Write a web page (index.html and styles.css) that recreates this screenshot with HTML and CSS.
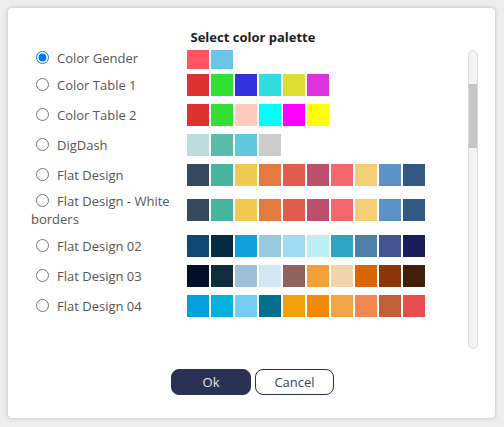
FILE: index.html
```html
<!DOCTYPE html>
<html>
<head>
<meta charset="utf-8">
<link rel="stylesheet" href="styles.css">
</head>
<body>
<div class="dialog">
  <div class="title">Select color palette</div>
  <div class="body">
    <div class="list">
      <div class="row first">
        <label class="name"><input type="radio" name="p" checked>Color Gender</label>
        <div class="swatches">
          <span class="sw" style="background:#fe5560"></span><span class="sw" style="background:#6bc5ea"></span>
        </div>
      </div>
      <div class="row">
        <label class="name"><input type="radio" name="p">Color Table 1</label>
        <div class="swatches">
          <span class="sw" style="background:#de3232"></span><span class="sw" style="background:#32e032"></span><span class="sw" style="background:#3232de"></span><span class="sw" style="background:#32dede"></span><span class="sw" style="background:#dede32"></span><span class="sw" style="background:#de32de"></span>
        </div>
      </div>
      <div class="row">
        <label class="name"><input type="radio" name="p">Color Table 2</label>
        <div class="swatches">
          <span class="sw" style="background:#de3232"></span><span class="sw" style="background:#32e032"></span><span class="sw" style="background:#ffccbf"></span><span class="sw" style="background:#00ffff"></span><span class="sw" style="background:#ff00ff"></span><span class="sw" style="background:#ffff00"></span>
        </div>
      </div>
      <div class="row">
        <label class="name"><input type="radio" name="p">DigDash</label>
        <div class="swatches">
          <span class="sw" style="background:#bddcdc"></span><span class="sw" style="background:#5abdac"></span><span class="sw" style="background:#62c8dc"></span><span class="sw" style="background:#cccccc"></span>
        </div>
      </div>
      <div class="row">
        <label class="name"><input type="radio" name="p">Flat Design</label>
        <div class="swatches">
          <span class="sw" style="background:#34495e"></span><span class="sw" style="background:#46b59c"></span><span class="sw" style="background:#f0c94f"></span><span class="sw" style="background:#e37b41"></span><span class="sw" style="background:#e05c4c"></span><span class="sw" style="background:#be4f6c"></span><span class="sw" style="background:#f2686c"></span><span class="sw" style="background:#f5cd74"></span><span class="sw" style="background:#5b93c8"></span><span class="sw" style="background:#325983"></span>
        </div>
      </div>
      <div class="row">
        <label class="name"><input type="radio" name="p">Flat Design - White borders</label>
        <div class="swatches">
          <span class="sw" style="background:#34495e"></span><span class="sw" style="background:#46b59c"></span><span class="sw" style="background:#f0c94f"></span><span class="sw" style="background:#e37b41"></span><span class="sw" style="background:#e05c4c"></span><span class="sw" style="background:#be4f6c"></span><span class="sw" style="background:#f2686c"></span><span class="sw" style="background:#f5cd74"></span><span class="sw" style="background:#5b93c8"></span><span class="sw" style="background:#325983"></span>
        </div>
      </div>
      <div class="row">
        <label class="name"><input type="radio" name="p">Flat Design 02</label>
        <div class="swatches">
          <span class="sw" style="background:#0c4a75"></span><span class="sw" style="background:#082b43"></span><span class="sw" style="background:#12a0dc"></span><span class="sw" style="background:#99cbe0"></span><span class="sw" style="background:#a2dcf2"></span><span class="sw" style="background:#bdeef3"></span><span class="sw" style="background:#2fa4c3"></span><span class="sw" style="background:#4d7fa7"></span><span class="sw" style="background:#42538d"></span><span class="sw" style="background:#1c1e5b"></span>
        </div>
      </div>
      <div class="row">
        <label class="name"><input type="radio" name="p">Flat Design 03</label>
        <div class="swatches">
          <span class="sw" style="background:#010e28"></span><span class="sw" style="background:#102d40"></span><span class="sw" style="background:#9ec0d9"></span><span class="sw" style="background:#d3e8f3"></span><span class="sw" style="background:#8f625c"></span><span class="sw" style="background:#f49f37"></span><span class="sw" style="background:#f2d4ac"></span><span class="sw" style="background:#da6502"></span><span class="sw" style="background:#8a3709"></span><span class="sw" style="background:#421e0d"></span>
        </div>
      </div>
      <div class="row">
        <label class="name"><input type="radio" name="p">Flat Design 04</label>
        <div class="swatches">
          <span class="sw" style="background:#03a0de"></span><span class="sw" style="background:#06b2dd"></span><span class="sw" style="background:#73cdf4"></span><span class="sw" style="background:#03718e"></span><span class="sw" style="background:#f3a10a"></span><span class="sw" style="background:#f28a05"></span><span class="sw" style="background:#f1a446"></span><span class="sw" style="background:#f2884f"></span><span class="sw" style="background:#c2603a"></span><span class="sw" style="background:#e74e4e"></span>
        </div>
      </div>
    </div>
    <div class="scrollbar"><div class="thumb-before"></div><div class="thumb"></div></div>
  </div>
  <div class="buttons">
    <button class="btn ok">Ok</button>
    <button class="btn cancel">Cancel</button>
  </div>
</div>
</body>
</html>
```
FILE: styles.css
```css
html, body {
  margin: 0;
  padding: 0;
}
body {
  background: #eeeeee;
  font-family: "Open Sans", "Liberation Sans", sans-serif;
  font-size: 13px;
  padding: 7px;
  width: 504px;
  height: 427px;
  box-sizing: border-box;
}
.dialog {
  width: 489px;
  height: 412px;
  box-sizing: border-box;
  background: #ffffff;
  border: 1px solid #d9d9d9;
  border-radius: 5px;
  box-shadow: 0 0 4px rgba(0, 0, 0, 0.12);
  display: flex;
  flex-direction: column;
}
.title {
  margin-top: 20px;
  text-align: center;
  font-weight: 700;
  color: #1e1e1e;
  line-height: 18px;
  padding-left: 3px;
}
.body {
  margin-top: 4px;
  display: flex;
  align-items: flex-start;
  padding-left: 23px;
  padding-right: 17px;
}
.list {
  flex: 1;
  height: 271px;
  overflow: hidden;
}
.rows-offset {
  margin-top: -3px;
}
.row {
  display: flex;
  align-items: center;
  min-height: 30px;
  padding: 3px 0 2px;
  box-sizing: border-box;
}
.row.first {
  min-height: 20px;
  padding: 0;
  margin-top: -3px;
}
.row.first .sw {
  height: 22px;
}
.name {
  width: 150px;
  margin-right: 6px;
  color: #555555;
  line-height: 18px;
  flex-shrink: 0;
}
.name input {
  margin: 0 8px 0 5px;
  width: 13px;
  height: 13px;
  vertical-align: -1px;
}
.swatches {
  display: flex;
  gap: 2px;
}
.sw {
  display: block;
  width: 22px;
  height: 22px;
}
.scrollbar {
  width: 10px;
  height: 299px;
  box-sizing: border-box;
  border: 1px solid #dadada;
  border-radius: 5px;
  background: #f3f3f3;
  overflow: hidden;
  display: flex;
  flex-direction: column;
}
.thumb-before {
  height: 33px;
  flex-shrink: 0;
}
.thumb {
  height: 64px;
  background: #c6c6c6;
  flex-shrink: 0;
}
.buttons {
  margin-top: 20px;
  display: flex;
  justify-content: center;
  gap: 4px;
  padding-left: 2px;
}
.btn {
  height: 26px;
  box-sizing: border-box;
  border-radius: 8px;
  font-family: "Open Sans", "Liberation Sans", sans-serif;
  font-size: 13px;
  padding: 0;
  cursor: pointer;
}
.ok {
  width: 80px;
  background: #2a3254;
  border: 1px solid #2a3254;
  color: #e4e4ea;
}
.cancel {
  width: 79px;
  background: #ffffff;
  border: 1px solid #2a3254;
  color: #3a4163;
}
```
